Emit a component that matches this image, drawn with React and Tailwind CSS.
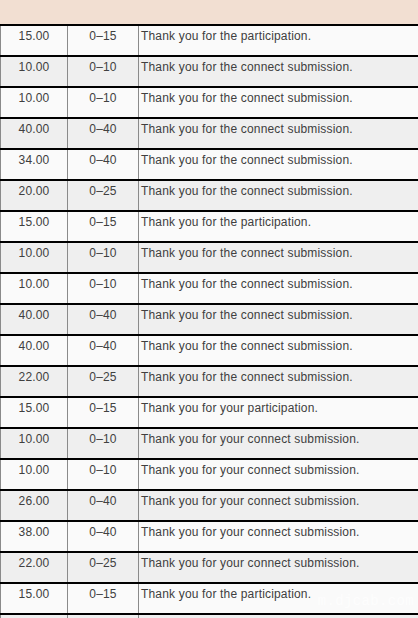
const rows = [
  ['15.00', '0–15', 'Thank you for the participation.'],
  ['10.00', '0–10', 'Thank you for the connect submission.'],
  ['10.00', '0–10', 'Thank you for the connect submission.'],
  ['40.00', '0–40', 'Thank you for the connect submission.'],
  ['34.00', '0–40', 'Thank you for the connect submission.'],
  ['20.00', '0–25', 'Thank you for the connect submission.'],
  ['15.00', '0–15', 'Thank you for the participation.'],
  ['10.00', '0–10', 'Thank you for the connect submission.'],
  ['10.00', '0–10', 'Thank you for the connect submission.'],
  ['40.00', '0–40', 'Thank you for the connect submission.'],
  ['40.00', '0–40', 'Thank you for the connect submission.'],
  ['22.00', '0–25', 'Thank you for the connect submission.'],
  ['15.00', '0–15', 'Thank you for your participation.'],
  ['10.00', '0–10', 'Thank you for your connect submission.'],
  ['10.00', '0–10', 'Thank you for your connect submission.'],
  ['26.00', '0–40', 'Thank you for your connect submission.'],
  ['38.00', '0–40', 'Thank you for your connect submission.'],
  ['22.00', '0–25', 'Thank you for your connect submission.'],
  ['15.00', '0–15', 'Thank you for the participation.'],
  ['', '', ''],
]

export default function App() {
  return (
    <div className="w-[418px] h-[618px] overflow-hidden bg-white font-['Liberation_Sans',Arial,sans-serif] text-[12px] tracking-[0.17px] text-[#404040] relative">
      <div className="h-[24px] bg-[#f2dfd2]" />
      {rows.map((r, i) => (
        <div
          key={i}
          className={`h-[31px] flex border-t-2 border-black ${i % 2 ? 'bg-[#efefef]' : 'bg-[#fafafa]'}`}
        >
          <div className="w-[68px] shrink-0 border-l border-r border-[#8a8a8a] text-center pt-[3px] leading-[15px]">
            {r[0]}
          </div>
          <div className="w-[71px] shrink-0 border-r border-[#8a8a8a] text-center pt-[3px] leading-[15px]">
            {r[1]}
          </div>
          <div className="flex-1 pl-[2px] pt-[3px] leading-[15px] whitespace-nowrap">{r[2]}</div>
        </div>
      ))}
      <div className="absolute right-[4px] top-[591px] font-['Liberation_Mono',monospace] text-[14px] text-white/70 tracking-wide">
        m.djcab.com
      </div>
    </div>
  )
}
